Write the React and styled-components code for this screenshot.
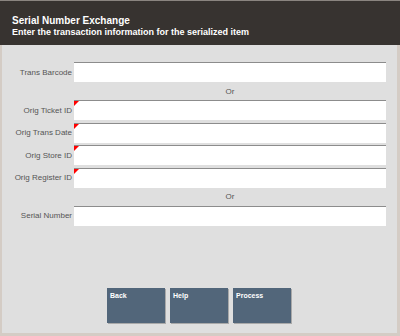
import React from "react";
import styled, { createGlobalStyle } from "styled-components";

const Global = createGlobalStyle`
  html, body { margin: 0; padding: 0; }
  body { font-family: "Liberation Sans", Arial, sans-serif; background: #dfdfdf; }
`;

const Screen = styled.div`
  width: 400px;
  height: 336px;
  box-sizing: border-box;
  display: flex;
  flex-direction: column;
  background: #dfdfdf;
  border-left: 2px solid #d4ccc5;
  border-right: 3px solid #d4ccc5;
  border-bottom: 3px solid #d4ccc5;
`;

const Header = styled.header`
  height: 45px;
  box-sizing: border-box;
  margin: 0 -3px 0 -2px;
  background: #373330;
  border-top: 1px solid #8a8580;
  padding: 14px 12px 0;
  color: #fff;
  font-weight: bold;
  display: flex;
  flex-direction: column;
`;

const Title = styled.div`
  font-size: 10px;
  line-height: 12px;
`;

const Subtitle = styled.div`
  font-size: 9px;
  line-height: 11px;
`;

const Form = styled.div`
  display: flex;
  flex-direction: column;
  padding: 17px 11px 0 0;
`;

const Group = styled.div`
  display: flex;
  flex-direction: column;
  gap: 2.5px;
`;

const Row = styled.div`
  display: grid;
  grid-template-columns: 70px 312px;
  column-gap: 2px;
  align-items: center;
  height: 20px;
`;

const Label = styled.div`
  font-size: 8px;
  color: #555;
  text-align: right;
  white-space: nowrap;
`;

const InputBox = styled.div`
  position: relative;
  height: 20px;
  box-sizing: border-box;
  background: #fff;
  border-top: 1px solid #8c8c8c;
`;

const Required = styled.span`
  position: absolute;
  left: 0;
  top: 0;
  width: 0;
  height: 0;
  border-top: 5px solid #f00;
  border-right: 5px solid transparent;
`;

const OrRow = styled.div`
  display: grid;
  grid-template-columns: 70px 312px;
  column-gap: 2px;
  height: 18px;
  align-items: center;
`;

const OrText = styled.div`
  grid-column: 2;
  text-align: center;
  font-size: 8px;
  color: #555;
`;

const ButtonBar = styled.div`
  margin-top: auto;
  display: flex;
  justify-content: center;
  gap: 5px;
  padding-bottom: 10px;
  padding-right: 1px;
`;

const Button = styled.div`
  width: 58px;
  height: 35px;
  box-sizing: border-box;
  background: #52667a;
  box-shadow: 1px 1px 0 #a9a9a9;
  color: #fff;
  font-size: 7px;
  font-weight: bold;
  padding: 3px 3px;
  line-height: 9px;
`;

function Field({ label, required }) {
  return (
    <Row>
      <Label>{label}</Label>
      <InputBox>{required && <Required />}</InputBox>
    </Row>
  );
}

export default function App() {
  return (
    <>
      <Global />
      <Screen>
        <Header>
          <Title>Serial Number Exchange</Title>
          <Subtitle>Enter the transaction information for the serialized item</Subtitle>
        </Header>
        <Form>
          <Field label="Trans Barcode" />
          <OrRow><OrText>Or</OrText></OrRow>
          <Group>
            <Field label="Orig Ticket ID" required />
            <Field label="Orig Trans Date" required />
            <Field label="Orig Store ID" required />
            <Field label="Orig Register ID" required />
          </Group>
          <OrRow><OrText>Or</OrText></OrRow>
          <Field label="Serial Number" />
        </Form>
        <ButtonBar>
          <Button>Back</Button>
          <Button>Help</Button>
          <Button>Process</Button>
        </ButtonBar>
      </Screen>
    </>
  );
}
